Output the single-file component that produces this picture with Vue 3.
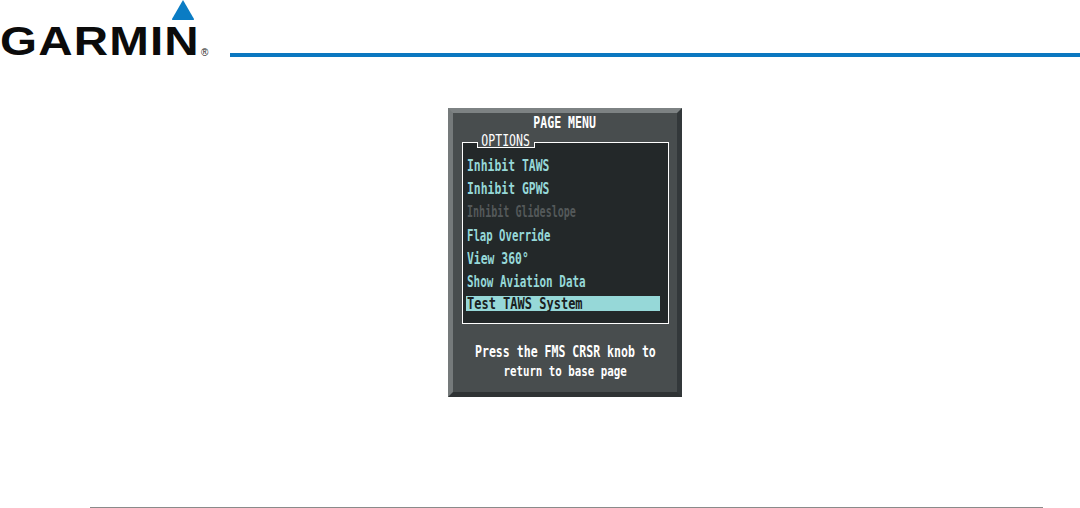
<template>
  <div class="page">
    <header class="top">
      <div class="logo">
        <svg class="delta" width="24" height="21" viewBox="0 0 24 21">
          <path d="M12 0 L23 19 Q23.500 20 22 20 L2 20 Q0.500 20 1 19 Z" fill="#0a7cc4" />
        </svg>
        <span class="wordmark">GARMIN</span>
        <span class="reg">®</span>
      </div>
      <div class="rule"></div>
    </header>

    <main class="content">
      <div class="panel">
        <div class="title"><span class="squeeze">PAGE MENU</span></div>
        <div class="options">
          <div class="legend"><span class="squeeze">OPTIONS</span></div>
          <ul class="list">
            <li v-for="item in items" :key="item.label" class="row" :class="item.state">
              <span class="squeeze left" :style="{ transform: `scaleX(${item.scale})` }">{{ item.label }}</span>
            </li>
          </ul>
        </div>
        <div class="help">
          <div class="help-main"><span class="squeeze">Press the FMS CRSR knob to</span></div>
          <div class="help-sub"><span class="squeeze">return to base page</span></div>
        </div>
      </div>
    </main>

    <footer class="bottom"></footer>
  </div>
</template>

<script setup>
// each row has its own squeeze, the avionics font is not really monospaced
const items = [
  { label: "Inhibit TAWS", state: "", scale: 0.76 },
  { label: "Inhibit GPWS", state: "", scale: 0.76 },
  { label: "Inhibit Glideslope", state: "off", scale: 0.67 },
  { label: "Flap Override", state: "", scale: 0.71 },
  { label: "View 360°", state: "", scale: 0.76 },
  { label: "Show Aviation Data", state: "", scale: 0.73 },
  { label: "Test TAWS System", state: "sel", scale: 0.8 },
]
</script>

<style>
html, body {
  margin: 0;
  background: #fff;
}
</style>

<style scoped>
.page {
  width: 1080px;
  height: 508px;
  display: flex;
  flex-direction: column;
  overflow: hidden;
  font-family: "DejaVu Sans Mono", "Liberation Mono", monospace;
}
.top {
  height: 108px;
  display: flex;
  flex-shrink: 0;
}
.logo {
  position: relative;
  width: 230px;
  height: 60px;
  font-family: "Liberation Sans", Arial, sans-serif;
}
.delta {
  position: absolute;
  left: 171px;
  top: 0;
}
.wordmark {
  position: absolute;
  left: 0;
  top: 19px;
  font-size: 41px;
  line-height: 44px;
  font-weight: 700;
  color: #0b0b0b;
  letter-spacing: 1px;
  transform: scaleX(1.16);
  transform-origin: left center;
}
.reg {
  position: absolute;
  left: 201px;
  top: 47px;
  font-size: 10px;
  line-height: 12px;
  color: #222;
}
.rule {
  flex: 1;
  height: 4px;
  margin-top: 53px;
  background: #0b77c0;
}
.content {
  flex: 1;
  display: flex;
  justify-content: center;
  padding-left: 50px;
}
.panel {
  width: 234px;
  height: 289px;
  box-sizing: border-box;
  border-style: solid;
  border-width: 5px;
  border-color: #7d8283 #33383a #2f3334 #757a7b;
  background: #484d4e;
  display: flex;
  flex-direction: column;
  padding: 0 8px 0 9px;
}
.squeeze {
  display: inline-block;
  transform: scaleX(0.77);
  white-space: pre;
}
.squeeze.left {
  transform-origin: left center;
}
.title {
  height: 29px;
  line-height: 21px;
  display: flex;
  justify-content: center;
  color: #fff;
  font-size: 15px;
  font-weight: 700;
  margin-right: 1px;
}
.options {
  position: relative;
  height: 182px;
  box-sizing: border-box;
  border: 1px solid #fff;
  background: #232829;
  padding-top: 12px;
}
.legend {
  position: absolute;
  left: 14px;
  top: -7px;
  width: 58px;
  height: 12px;
  background: #484d4e;
  line-height: 11px;
  font-size: 15px;
  color: #fff;
  display: flex;
  justify-content: center;
}
.legend::after {
  content: "";
  position: absolute;
  left: 0;
  right: 0;
  top: 6px;
  bottom: 0;
  border: 1px solid #fff;
  border-top: none;
}
.list {
  list-style: none;
  margin: 0;
  padding: 0 8px 0 3px;
}
.row {
  height: 23.200px;
  line-height: 23px;
  padding-left: 1px;
  font-size: 15px;
  font-weight: 700;
  color: #96d8d8;
}
.row.off {
  color: #54595a;
}
.row.sel {
  height: 15px;
  line-height: 16px;
  margin-top: 2px;
  background: #96d8d8;
  color: #1a2020;
}
.help {
  flex: 1;
  color: #fff;
  font-weight: 700;
  font-size: 15px;
  padding-top: 18px;
  margin-right: 1px;
}
.help-main {
  height: 20px;
  line-height: 20px;
  display: flex;
  justify-content: center;
}
.help-sub {
  height: 20px;
  line-height: 19px;
  font-size: 14px;
  display: flex;
  justify-content: center;
}
.bottom {
  height: 1px;
  margin: 0 37px 0 90px;
  background: #8a8a8a;
  flex-shrink: 0;
}
</style>
